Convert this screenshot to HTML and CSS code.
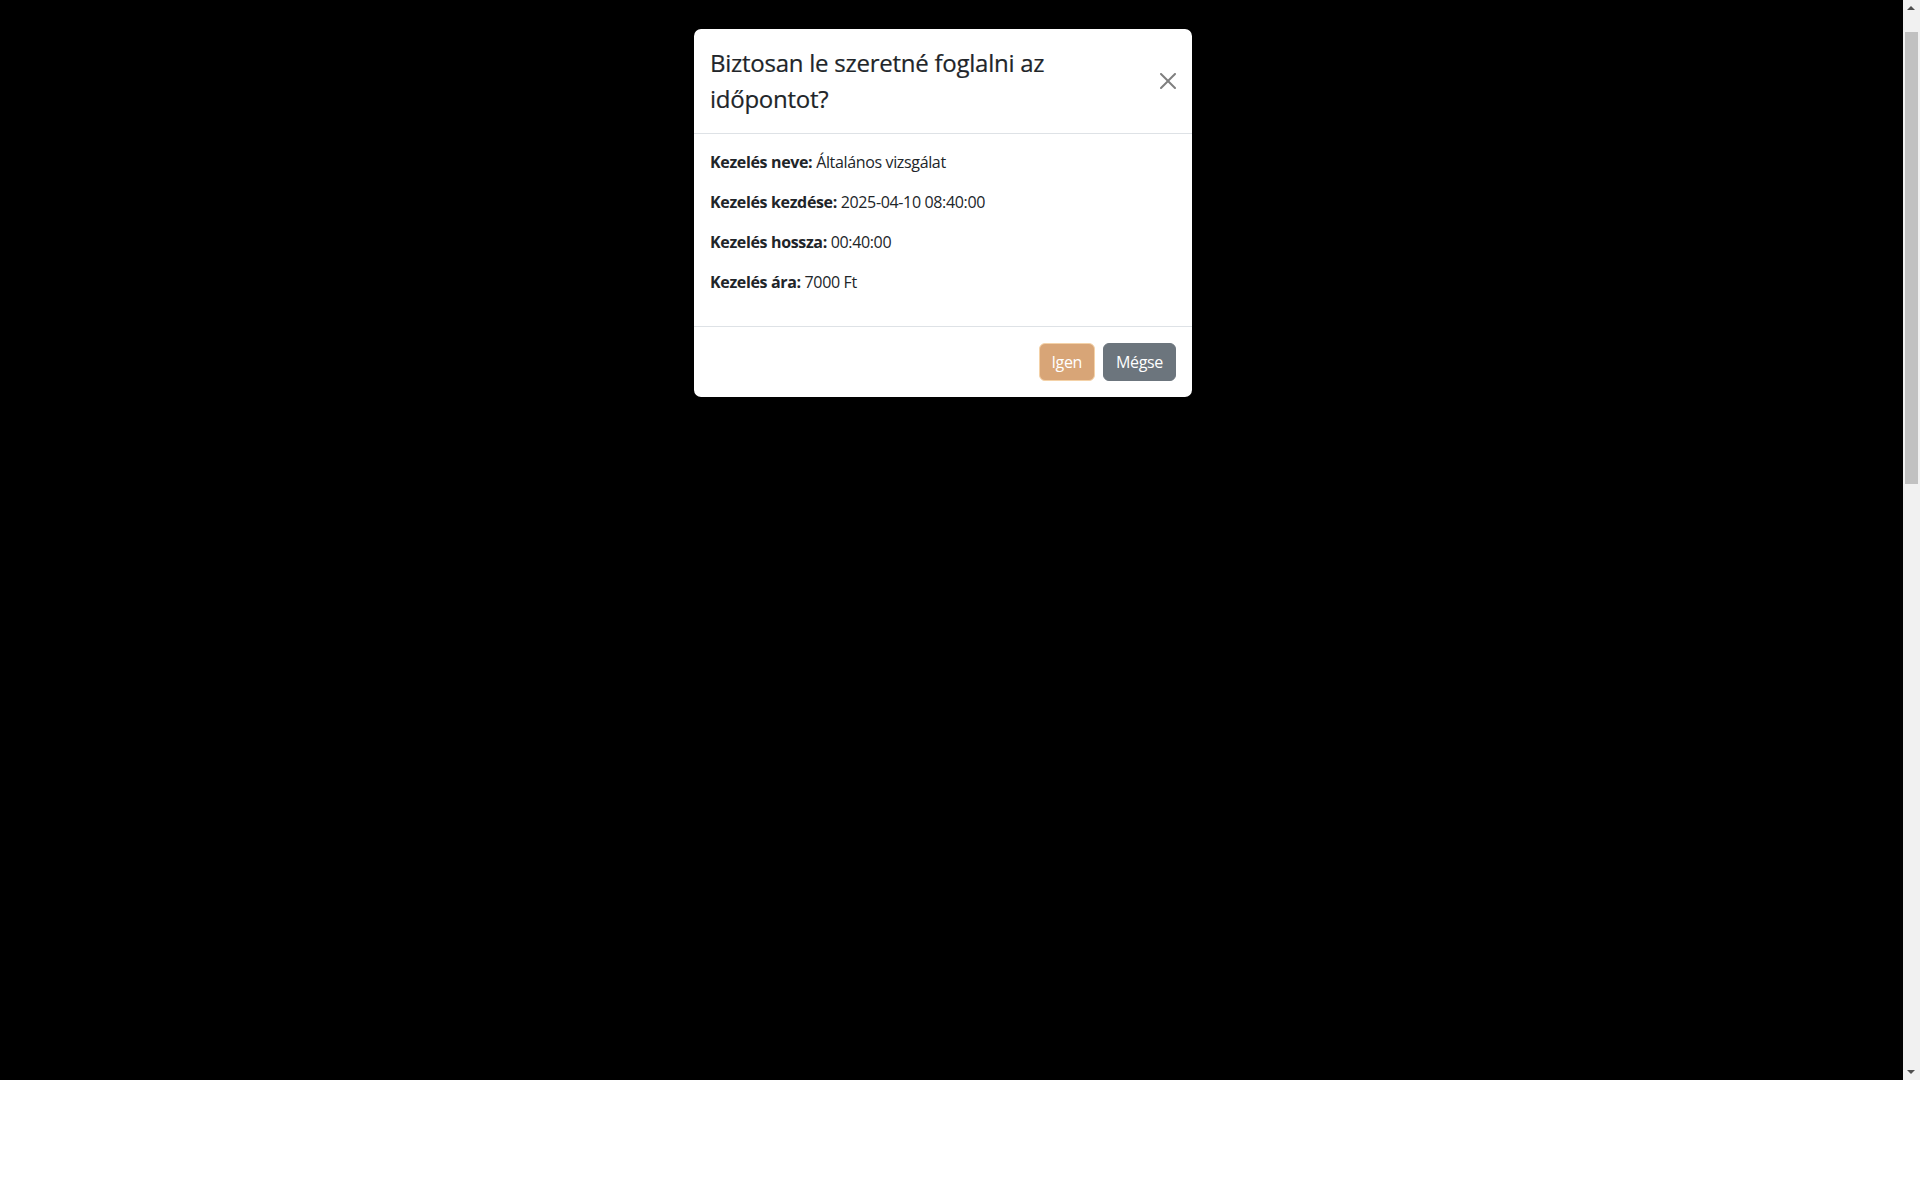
FILE: index.html
```html
<!DOCTYPE html>
<html lang="hu">
<head>
<meta charset="utf-8">
<title>Időpont foglalás</title>
<link rel="stylesheet" href="styles.css">
</head>
<body>
<div class="viewport">
  <div class="screen">
    <div class="modal-dialog">
      <div class="modal-content">
        <div class="modal-header">
          <h4 class="modal-title">Biztosan le szeretné foglalni az időpontot?</h4>
          <button class="btn-close" type="button" aria-label="Bezárás">
            <svg viewBox="0 0 16 16" width="16" height="16"><path d="M.293.293a1 1 0 0 1 1.414 0L8 6.586 14.293.293a1 1 0 1 1 1.414 1.414L9.414 8l6.293 6.293a1 1 0 0 1-1.414 1.414L8 9.414l-6.293 6.293a1 1 0 0 1-1.414-1.414L6.586 8 .293 1.707a1 1 0 0 1 0-1.414z" fill="#000" fill-opacity=".5"/></svg>
          </button>
        </div>
        <div class="modal-body">
          <p><b>Kezelés neve:</b> Általános vizsgálat</p>
          <p><b>Kezelés kezdése:</b> 2025-04-10 08:40:00</p>
          <p><b>Kezelés hossza:</b> 00:40:00</p>
          <p><b>Kezelés ára:</b> 7000 Ft</p>
        </div>
        <div class="modal-footer">
          <button class="btn btn-primary" type="button">Igen</button>
          <button class="btn btn-secondary" type="button">Mégse</button>
        </div>
      </div>
    </div>
  </div>
  <div class="scrollbar">
    <div class="sb-arrow sb-up"></div>
    <div class="sb-track"><div class="sb-thumb"></div></div>
    <div class="sb-arrow sb-down"></div>
  </div>
</div>
</body>
</html>
```
FILE: styles.css
```css
html, body {
  margin: 0;
  padding: 0;
  background: #fff;
}
body {
  font-family: "Open Sans", "Noto Sans", sans-serif;
  font-size: 16px;
  line-height: 1.5;
  color: #212529;
  letter-spacing: -0.35px;
}
.viewport {
  display: flex;
  height: 1080px;
}
.screen {
  flex: 1;
  background: #000;
  padding-right: 17px;
}
.modal-dialog {
  width: 500px;
  margin: 28px auto;
}
.modal-content {
  background: #fff;
  background-clip: padding-box;
  border: 1px solid rgba(0,0,0,.175);
  border-radius: 8px;
  display: flex;
  flex-direction: column;
}
.modal-header {
  display: flex;
  align-items: center;
  padding: 16px;
  border-bottom: 1px solid #dee2e6;
}
.modal-title {
  margin: 0;
  font-size: 24px;
  font-weight: 500;
  line-height: 1.5;
  letter-spacing: -0.25px;
  flex: 1;
  -webkit-text-stroke: 0.2px #212529;
}
.btn-close {
  width: 16px;
  height: 16px;
  padding: 8px;
  margin: -8px -8px -8px auto;
  box-sizing: content-box;
  border: 0;
  background: transparent;
  display: flex;
  align-items: center;
  justify-content: center;
}
.btn-close svg { display: block; }
.modal-body {
  padding: 16px;
}
.modal-body p {
  margin: 0 0 16px;
}
.modal-body b {
  font-weight: 700;
}
.modal-footer {
  display: flex;
  justify-content: flex-end;
  align-items: center;
  padding: 12px;
  border-top: 1px solid #dee2e6;
}
.btn {
  font-family: inherit;
  font-size: 16px;
  line-height: 24px;
  letter-spacing: inherit;
  padding: 6px 12px;
  border-radius: 6px;
  border: 1px solid transparent;
  margin: 4px;
  color: #fff;
}
.btn-primary {
  background: #d8a577;
  border-color: #f4d2a8;
}
.btn-secondary {
  background: #6c757d;
  border-color: #6c757d;
}
.scrollbar {
  width: 17px;
  background: #f1f1f1;
  display: flex;
  flex-direction: column;
}
.sb-arrow {
  height: 17px;
  position: relative;
}
.sb-up::after, .sb-down::after {
  content: "";
  position: absolute;
  left: 4px;
  border-left: 4px solid transparent;
  border-right: 4px solid transparent;
}
.sb-up::after {
  top: 6px;
  border-bottom: 4px solid #505050;
}
.sb-down::after {
  top: 7px;
  border-top: 4px solid #505050;
}
.sb-track {
  flex: 1;
  padding: 15px 2px 0;
}
.sb-thumb {
  height: 452px;
  background: #c1c1c1;
}
```
